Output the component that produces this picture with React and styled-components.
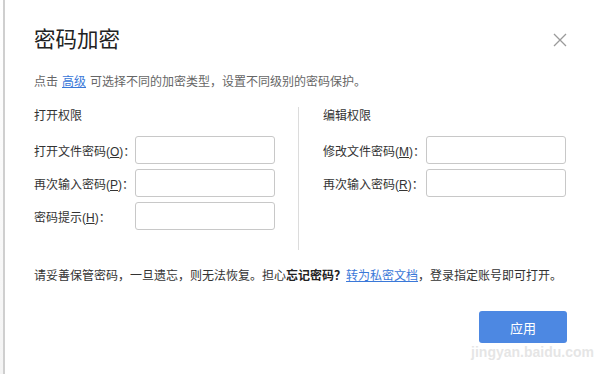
import React from 'react';
import styled, { createGlobalStyle } from 'styled-components';

const GlobalStyle = createGlobalStyle`
  html, body {
    margin: 0;
    padding: 0;
    background: #fff;
  }
  body {
    font-family: "Liberation Sans", "Noto Sans CJK SC", sans-serif;
  }
`;

const Page = styled.div`
  display: flex;
  width: 598px;
  height: 374px;
  overflow: hidden;
`;

const Backdrop = styled.div`
  width: 3px;
  flex: none;
  background: linear-gradient(#fff, #f4f4f4);
`;

const Dialog = styled.div`
  position: relative;
  flex: 1;
  border-left: 2px solid #cfcfcf;
  padding: 25px 31px 0 29px;
  background: #fff;
  color: #333;
  font-size: 12px;
`;

const Header = styled.div`
  display: flex;
  align-items: center;
  justify-content: space-between;
  height: 30px;
`;

const Title = styled.h1`
  margin: 0;
  font-size: 21.5px;
  font-weight: normal;
  color: #222;
  line-height: 30px;
`;

const CloseButton = styled.button`
  width: 15px;
  height: 15px;
  padding: 0;
  border: 0;
  background: none;
  cursor: pointer;
`;

const Desc = styled.p`
  margin: 18px 0 0;
  line-height: 18px;
  color: #666;
`;

const Link = styled.a`
  color: #3a78d8;
  text-decoration: underline;
  margin: ${(p) => (p.$spaced ? '0 4px' : '0')};
`;

const Sections = styled.div`
  display: flex;
  margin-top: 16px;
  height: 143px;
`;

const Section = styled.div`
  width: ${(p) => p.$width}px;
`;

const Divider = styled.div`
  width: 1px;
  background: #dcdcdc;
  margin: 0 24px 0 23px;
`;

const SectionTitle = styled.div`
  line-height: 18px;
  color: #333;
  margin-bottom: 11px;
`;

const Rows = styled.div`
  display: flex;
  flex-direction: column;
  gap: 5px;
`;

const Row = styled.label`
  display: flex;
  align-items: center;
`;

const Label = styled.span`
  width: ${(p) => p.$width}px;
  flex: none;
  color: #333;
  white-space: nowrap;
`;

const Key = styled.span`
  text-decoration: underline;
`;

const Input = styled.input`
  box-sizing: border-box;
  width: 140px;
  height: 28px;
  border: 1px solid #c8c8c8;
  border-radius: 3px;
  background: #fff;
  outline: none;
`;

const Notice = styled.p`
  margin: 17px 0 0;
  line-height: 18px;
  color: #333;
  white-space: nowrap;
`;

const Strong = styled.b`
  font-weight: bold;
  color: #222;
`;

const Footer = styled.div`
  display: flex;
  justify-content: flex-end;
  margin-top: 26px;
`;

const ApplyButton = styled.button`
  width: 88px;
  height: 32px;
  border: 0;
  border-radius: 3px;
  background: #4d88e2;
  color: #fff;
  font-family: inherit;
  font-size: 13px;
  cursor: pointer;
`;

const WatermarkUrl = styled.div`
  position: absolute;
  right: 4px;
  bottom: 14px;
  font-size: 14px;
  line-height: 16px;
  font-weight: bold;
  color: rgba(225, 225, 225, 0.85);
  pointer-events: none;
`;

const CloseIcon = () => (
  <svg width="14" height="14" viewBox="0 0 14 14">
    <path d="M1 1 L13 13 M13 1 L1 13" stroke="#9a9a9a" strokeWidth="1.3" fill="none" />
  </svg>
);

const Field = ({ text, hotkey, labelWidth }) => (
  <Row>
    <Label $width={labelWidth}>
      {text}(<Key>{hotkey}</Key>)：
    </Label>
    <Input type="password" />
  </Row>
);

const App = () => (
  <Page>
    <GlobalStyle />
    <Backdrop />
    <Dialog>
      <Header>
        <Title>密码加密</Title>
        <CloseButton aria-label="关闭"><CloseIcon /></CloseButton>
      </Header>
      <Desc>
        点击<Link $spaced href="#">高级</Link>可选择不同的加密类型，设置不同级别的密码保护。
      </Desc>
      <Sections>
        <Section $width={241}>
          <SectionTitle>打开权限</SectionTitle>
          <Rows>
            <Field text="打开文件密码" hotkey="O" labelWidth={101} />
            <Field text="再次输入密码" hotkey="P" labelWidth={101} />
            <Field text="密码提示" hotkey="H" labelWidth={101} />
          </Rows>
        </Section>
        <Divider />
        <Section $width={243}>
          <SectionTitle>编辑权限</SectionTitle>
          <Rows>
            <Field text="修改文件密码" hotkey="M" labelWidth={103} />
            <Field text="再次输入密码" hotkey="R" labelWidth={103} />
          </Rows>
        </Section>
      </Sections>
      <Notice>
        请妥善保管密码，一旦遗忘，则无法恢复。担心<Strong>忘记密码？</Strong><Link href="#">转为私密文档</Link>，登录指定账号即可打开。
      </Notice>
      <Footer>
        <ApplyButton>应用</ApplyButton>
      </Footer>
      <WatermarkUrl>jingyan.baidu.com</WatermarkUrl>
    </Dialog>
  </Page>
);

export default App;
